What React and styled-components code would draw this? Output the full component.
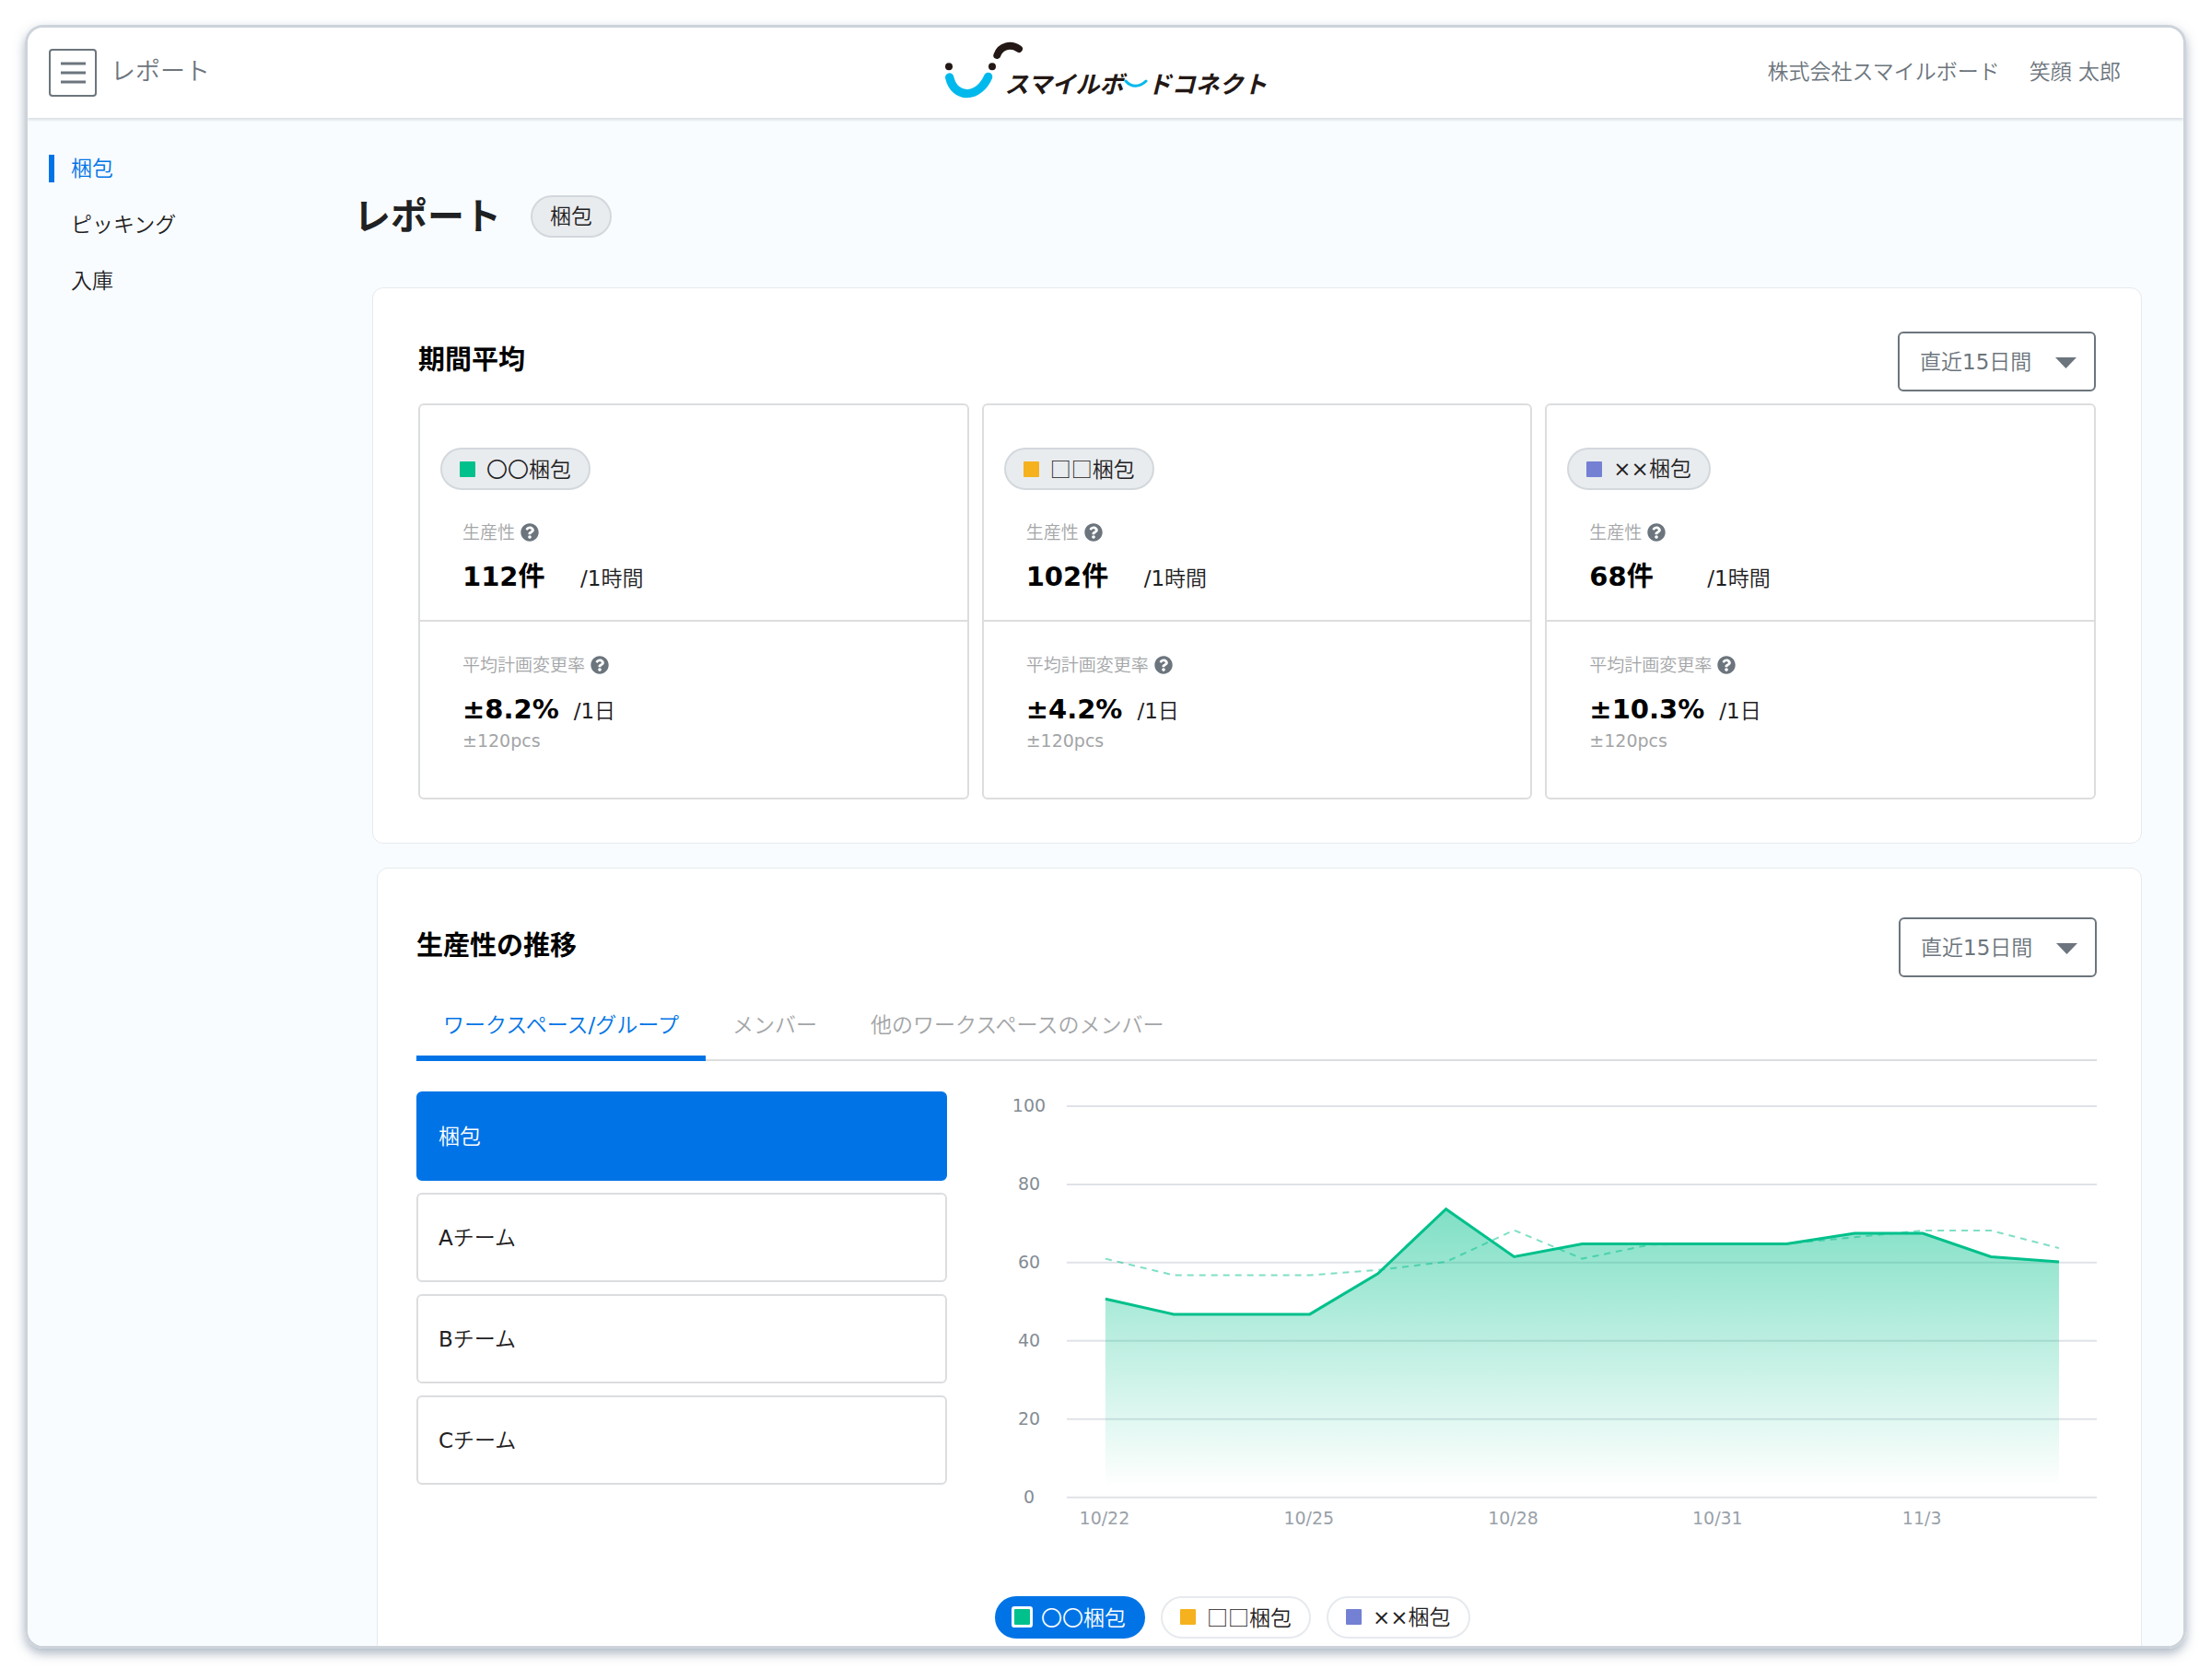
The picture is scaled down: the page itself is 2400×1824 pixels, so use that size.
import React from "react";
import styled, { createGlobalStyle } from "styled-components";
import { FaQuestionCircle } from "react-icons/fa";

const color = {
  ink: "#1f2122",
  strong: "#000000",
  gray: "#6c757d",
  muted: "#a3a5a7",
  line: "#dcdddf",
  faint: "#e6eaee",
  chip: "#e9ecef",
  blue: "#0074e6",
  green: "#00c08b",
  amber: "#f5b11e",
  violet: "#7380d3",
  page: "#f8fcff",
};

const cjk = `"Noto Sans CJK JP", sans-serif`;
const cjkLight = `"Noto Sans CJK JP DemiLight", ${cjk}`;
const boldStack = `"DejaVu Sans", ${cjk}`;

const GlobalStyle = createGlobalStyle`
  * { box-sizing: border-box; }
  body {
    margin: 0;
    background: #ffffff;
    color: ${color.ink};
    font-family: "DejaVu Sans", ${cjkLight};
    font-size: 23px;
    line-height: 30px;
  }
  button, select { font: inherit; color: inherit; margin: 0; }
  h1, h2, p, ul { margin: 0; padding: 0; }
  h1, h2, strong { font-family: ${boldStack}; font-weight: 700; }
  ul { list-style: none; }
`;

const Frame = styled.div`
  display: flex;
  flex-direction: column;
  height: calc(100vh - 61px);
  margin: 27px 27px 34px;
  border: 3px solid #cdd3da;
  border-radius: 20px;
  overflow: hidden;
  box-shadow: 0 5px 12px rgba(90, 110, 135, 0.5);
`;

const Header = styled.header`
  flex: none;
  z-index: 1;
  display: grid;
  grid-template-columns: 1fr auto 1fr;
  align-items: center;
  height: 98px;
  padding: 0 23px;
  background: #ffffff;
  color: ${color.gray};
  box-shadow: 0 2px 3px rgba(80, 95, 110, 0.2);
`;

const HeaderLeft = styled.div`
  display: flex;
  align-items: center;
  gap: 15px;
`;

const PageName = styled.span`
  padding-bottom: 3px;
  font-size: 27px;
`;

const MenuButton = styled.button`
  display: grid;
  place-items: center;
  width: 52px;
  height: 52px;
  padding: 0;
  background: #ffffff;
  border: 2px solid ${color.gray};
  border-radius: 4px;
`;

const HeaderRight = styled.div`
  display: flex;
  justify-content: flex-end;
  gap: 32px;
  padding: 0 45px 3px 0;
`;

const LogoBox = styled.div`
  display: flex;
  align-items: flex-end;
  padding-bottom: 7px;
  color: #231815;
`;

const LogoWord = styled.div`
  display: flex;
  align-items: center;
  margin-left: -22px;
  padding-bottom: 3px;
  font-family: ${cjk};
  font-size: 26px;
  font-style: italic;
  font-weight: 700;
`;

const Body = styled.div`
  flex: 1;
  display: flex;
  min-height: 0;
  background: ${color.page};
`;

const Sidebar = styled.nav`
  flex: none;
  width: 354px;
  padding: 40px 23px;
`;

const NavList = styled.ul`
  display: grid;
  gap: 31px;
`;

const NavLink = styled.a`
  display: block;
  padding-left: 18px;
  border-left: 6px solid ${(p) => (p.$active ? color.blue : "transparent")};
  color: ${(p) => (p.$active ? color.blue : color.ink)};
  text-decoration: none;
`;

const Main = styled.main`
  flex: 1;
  min-width: 0;
  padding: 84px 45px 0 0;
  overflow: hidden;
`;

const TitleRow = styled.div`
  display: flex;
  align-items: center;
  gap: 32px;
  margin-bottom: 54px;
`;

const Title = styled.h1`
  font-size: 40px;
  line-height: 46px;
`;

const Chip = styled.span`
  display: inline-flex;
  align-items: center;
  gap: 12px;
  height: 46px;
  padding: 0 19px;
  border: 2px solid ${(p) => (p.$active ? color.blue : p.$outline ? color.faint : "#d3d8dd")};
  border-radius: 23px;
  background: ${(p) => (p.$active ? color.blue : p.$outline ? "#ffffff" : color.chip)};
  color: ${(p) => (p.$active ? "#ffffff" : color.ink)};
`;

const Swatch = styled.i`
  width: 17px;
  height: 17px;
  border-radius: 1px;
  background: ${(p) => p.$color};
  box-shadow: ${(p) => (p.$ring ? "0 0 0 3px #ffffff" : "none")};
`;

const Symbols = styled.span`
  font-family: ${(p) => (p.$narrow ? "inherit" : cjkLight)};
`;

const Card = styled.section`
  margin-left: 20px;
  padding: 47px 49px;
  background: #ffffff;
  border: 1px solid ${color.faint};
  border-radius: 12px;
`;

const TrendCard = styled(Card)`
  margin: 26px 0 0 25px;
  padding: 53px 48px 47px 42px;
`;

const CardHead = styled.div`
  display: flex;
  align-items: center;
  justify-content: space-between;
`;

const CardTitle = styled.h2`
  padding-bottom: 4px;
  color: ${color.strong};
  font-size: 29px;
  line-height: 40px;
`;

const SelectBox = styled.div`
  position: relative;
  color: ${color.gray};
`;

const Select = styled.select`
  appearance: none;
  display: block;
  width: 215px;
  height: 65px;
  padding: 0 64px 0 22px;
  background: #ffffff;
  border: 2px solid ${color.gray};
  border-radius: 6px;
`;

const Caret = styled.svg`
  position: absolute;
  right: 21px;
  top: 28px;
  pointer-events: none;
`;

const StatGrid = styled.div`
  display: grid;
  grid-template-columns: repeat(3, 1fr);
  gap: 14px;
  margin-top: 13px;
`;

const Stat = styled.article`
  border: 2px solid ${color.line};
  border-radius: 6px;
`;

const StatTop = styled.div`
  padding: 46px 22px 25px;
  border-bottom: 2px solid ${color.line};
`;

const StatBottom = styled.div`
  padding: 32px 22px 50px;
`;

const Metric = styled.div`
  padding-left: 24px;
  margin-top: ${(p) => (p.$spaced ? "31px" : "0")};
`;

const MetricLabel = styled.div`
  display: flex;
  align-items: center;
  gap: 6px;
  color: ${color.muted};
  font-size: 19px;

  svg { color: ${color.gray}; }
`;

const MetricRow = styled.div`
  display: flex;
  align-items: baseline;
  gap: 16px;
  margin-top: 13px;
  line-height: 40px;
`;

const MetricValue = styled.strong`
  min-width: ${(p) => (p.$wide ? "112px" : "0")};
  color: ${color.strong};
  font-size: 29px;
`;

const MetricNote = styled.p`
  color: ${color.muted};
  font-size: 19px;
  line-height: 24px;
`;

const Tabs = styled.div`
  display: flex;
  margin-top: 19px;
  box-shadow: inset 0 -2px ${color.line};
`;

const Tab = styled.button`
  padding: 18px 29px;
  background: none;
  border: 0;
  border-bottom: 6px solid ${(p) => (p.$active ? color.blue : "transparent")};
  color: ${(p) => (p.$active ? color.blue : color.muted)};
`;

const Split = styled.div`
  display: grid;
  grid-template-columns: 576px minmax(0, 1fr);
  gap: 52px;
  margin-top: 33px;
`;

const TeamList = styled.div`
  display: flex;
  flex-direction: column;
  gap: 13px;
`;

const TeamButton = styled.button`
  height: 97px;
  padding: 0 22px;
  text-align: left;
  border: 2px solid ${(p) => (p.$active ? color.blue : color.line)};
  border-radius: 6px;
  background: ${(p) => (p.$active ? color.blue : "#ffffff")};
  color: ${(p) => (p.$active ? "#ffffff" : color.ink)};
`;

const ChartSvg = styled.svg`
  display: block;
  width: 100%;
  height: auto;
  font-size: 19px;
`;

const Legend = styled.div`
  display: flex;
  gap: 17px;
  margin-top: 48px;
`;

const workspaces = [
  { symbols: "〇〇", name: "梱包", color: color.green, rate: "112件", change: "±8.2%" },
  { symbols: "□□", name: "梱包", color: color.amber, rate: "102件", change: "±4.2%" },
  { symbols: "××", name: "梱包", color: color.violet, rate: "68件", change: "±10.3%", narrow: true },
];

const current = [50.7, 46.8, 46.8, 46.8, 57.2, 73.7, 61.5, 64.8, 64.8, 64.8, 64.8, 67.5, 67.5, 61.5, 60.2];
const previous = [61, 56.8, 56.8, 56.8, 58.1, 60.2, 68.3, 61, 64.6, 64.8, 64.8, 66.5, 68.2, 68.2, 63.7];
const dates = ["10/22", "10/25", "10/28", "10/31", "11/3"];

const px = (i) => 120 + i * 74;
const py = (v) => 441 - v * 4.25;
const toPoints = (values) => values.map((v, i) => `${px(i)},${py(v)}`).join(" ");

function WorkspaceLabel({ item, ring }) {
  return (
    <>
      <Swatch $color={item.color} $ring={ring} />
      <span>
        <Symbols $narrow={item.narrow}>{item.symbols}</Symbols>
        {item.name}
      </span>
    </>
  );
}

function Logo() {
  return (
    <LogoBox>
      <svg width="88" height="64" viewBox="72 72 264 192" fill="none" strokeLinecap="round" aria-hidden="true">
        <circle cx="90" cy="157" r="12" fill="#231815" />
        <circle cx="231" cy="157" r="12" fill="#231815" />
        <path d="M92 192C100 228 124 245 148 245C178 245 204 222 218 190" stroke="#00b9ec" strokeWidth="28" />
        <path d="M247 120C258 88 292 82 318 99" stroke="#231815" strokeWidth="24" />
      </svg>
      <LogoWord>
        <span>スマイルボ</span>
        <svg width="26" height="26" viewBox="0 0 26 26" fill="none" aria-hidden="true">
          <path d="M2 11C8 18 17 18 24 11" stroke="#00b9ec" strokeWidth="3" strokeLinecap="round" />
        </svg>
        <span>ドコネクト</span>
      </LogoWord>
    </LogoBox>
  );
}

function PeriodSelect({ labelledBy }) {
  return (
    <SelectBox>
      <Select aria-labelledby={labelledBy}>
        <option>直近15日間</option>
      </Select>
      <Caret width="23" height="12" viewBox="0 0 23 12" aria-hidden="true">
        <path d="M0 0H23L11.5 12Z" fill={color.gray} />
      </Caret>
    </SelectBox>
  );
}

function Chart() {
  return (
    <ChartSvg viewBox="0 0 1197 500" role="img" aria-label="生産性の推移">
      <defs>
        <linearGradient id="area" x1="0" y1="128" x2="0" y2="430" gradientUnits="userSpaceOnUse">
          <stop offset="0" stopColor={color.green} stopOpacity="0.5" />
          <stop offset="1" stopColor={color.green} stopOpacity="0" />
        </linearGradient>
      </defs>
      {[0, 20, 40, 60, 80, 100].map((v) => (
        <g key={v}>
          <path d={`M78 ${py(v)}H1197`} stroke="#dfe3e8" strokeWidth="2" />
          <text x="37" y={py(v) + 6} textAnchor="middle" fill="#858d95">{v}</text>
        </g>
      ))}
      <polygon points={`${px(0)},${py(0)} ${toPoints(current)} ${px(14)},${py(0)}`} fill="url(#area)" />
      <polyline points={toPoints(previous)} fill="none" stroke={color.green} strokeOpacity="0.5" strokeWidth="2" strokeDasharray="7 6" />
      <polyline points={toPoints(current)} fill="none" stroke={color.green} strokeWidth="3" />
      {dates.map((d, i) => (
        <text key={d} x={px(i * 3) - 1} y="470" textAnchor="middle" fill="#99a1a9">{d}</text>
      ))}
    </ChartSvg>
  );
}

export default function App() {
  return (
    <>
      <GlobalStyle />
      <Frame lang="ja">
        <Header>
          <HeaderLeft>
            <MenuButton aria-label="メニュー">
              <svg width="27" height="24" viewBox="0 0 27 24" aria-hidden="true">
                <path d="M0 2H27M0 12H27M0 22H27" stroke={color.gray} strokeWidth="3" />
              </svg>
            </MenuButton>
            <PageName>レポート</PageName>
          </HeaderLeft>
          <Logo />
          <HeaderRight>
            <span>株式会社スマイルボード</span>
            <span>笑顔 太郎</span>
          </HeaderRight>
        </Header>
        <Body>
          <Sidebar>
            <NavList>
              <li><NavLink href="#packing" $active>梱包</NavLink></li>
              <li><NavLink href="#picking">ピッキング</NavLink></li>
              <li><NavLink href="#receiving">入庫</NavLink></li>
            </NavList>
          </Sidebar>
          <Main>
            <TitleRow>
              <Title>レポート</Title>
              <Chip>梱包</Chip>
            </TitleRow>
            <Card>
              <CardHead>
                <CardTitle id="average">期間平均</CardTitle>
                <PeriodSelect labelledBy="average" />
              </CardHead>
              <StatGrid>
                {workspaces.map((w) => (
                  <Stat key={w.symbols}>
                    <StatTop>
                      <Chip><WorkspaceLabel item={w} /></Chip>
                      <Metric $spaced>
                        <MetricLabel>生産性<FaQuestionCircle size={20} /></MetricLabel>
                        <MetricRow>
                          <MetricValue $wide>{w.rate}</MetricValue>
                          <span>/1時間</span>
                        </MetricRow>
                      </Metric>
                    </StatTop>
                    <StatBottom>
                      <Metric>
                        <MetricLabel>平均計画変更率<FaQuestionCircle size={20} /></MetricLabel>
                        <MetricRow>
                          <MetricValue>{w.change}</MetricValue>
                          <span>/1日</span>
                        </MetricRow>
                        <MetricNote>±120pcs</MetricNote>
                      </Metric>
                    </StatBottom>
                  </Stat>
                ))}
              </StatGrid>
            </Card>
            <TrendCard>
              <CardHead>
                <CardTitle id="trend">生産性の推移</CardTitle>
                <PeriodSelect labelledBy="trend" />
              </CardHead>
              <Tabs role="tablist">
                <Tab role="tab" aria-selected="true" $active>ワークスペース/グループ</Tab>
                <Tab role="tab" aria-selected="false">メンバー</Tab>
                <Tab role="tab" aria-selected="false">他のワークスペースのメンバー</Tab>
              </Tabs>
              <Split>
                <TeamList>
                  <TeamButton $active>梱包</TeamButton>
                  <TeamButton>Aチーム</TeamButton>
                  <TeamButton>Bチーム</TeamButton>
                  <TeamButton>Cチーム</TeamButton>
                </TeamList>
                <div>
                  <Chart />
                  <Legend>
                    {workspaces.map((w, i) => (
                      <Chip as="button" key={w.symbols} $active={i === 0} $outline>
                        <WorkspaceLabel item={w} ring={i === 0} />
                      </Chip>
                    ))}
                  </Legend>
                </div>
              </Split>
            </TrendCard>
          </Main>
        </Body>
      </Frame>
    </>
  );
}
